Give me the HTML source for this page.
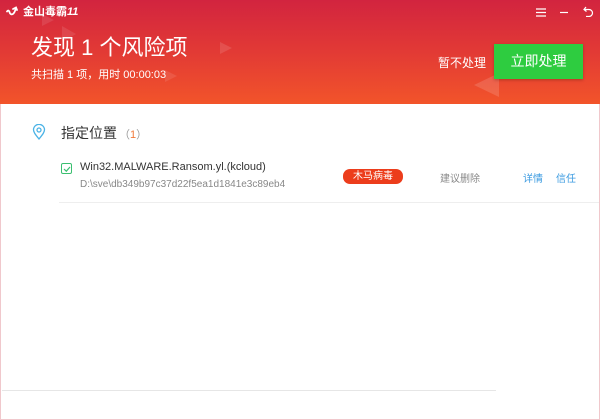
<!DOCTYPE html>
<html><head><meta charset="utf-8"><style>
*{margin:0;padding:0;box-sizing:border-box}
body{width:600px;height:420px;overflow:hidden;background:#fff;font-family:"Liberation Sans","Noto Sans CJK SC",sans-serif;position:relative}
.hd{position:absolute;left:0;top:0;width:600px;height:104px;background:linear-gradient(180deg,#d2243f 0%,#e23a35 50%,#f2542a 100%);overflow:hidden}
.tri{position:absolute;width:0;height:0;border-style:solid}
.t{position:absolute;color:#fff;white-space:nowrap;line-height:1}
.frame{position:absolute;left:0;top:104px;width:600px;height:316px;border:1px solid #f0c8cc;border-top:none}
</style></head><body>
<div class="hd">
 <div class="tri" style="left:42px;top:14px;border-width:6px 0 6px 12px;border-color:transparent transparent transparent rgba(255,255,255,.1)"></div>
 <div class="tri" style="left:62px;top:26px;border-width:8px 0 8px 14px;border-color:transparent transparent transparent rgba(255,255,255,.1)"></div>
 <div class="tri" style="left:220px;top:42px;border-width:6px 0 6px 12px;border-color:transparent transparent transparent rgba(255,255,255,.12)"></div>
 <div class="tri" style="left:165px;top:70px;border-width:6px 0 6px 12px;border-color:transparent transparent transparent rgba(255,255,255,.1)"></div>
 <div class="tri" style="left:474px;top:73px;border-width:12px 25px 12px 0;border-color:transparent rgba(255,255,255,.14) transparent transparent"></div>
 <svg style="position:absolute;left:6px;top:6px" width="12" height="12" viewBox="0 0 12 12"><path d="M1 5.5C2 4 3 4.5 3.5 6C4 8.5 6 9 7.5 7.5C9 6 9.5 3.5 10 1.5M7 3L10 1.5L11 4" fill="none" stroke="#fff" stroke-width="1.8" stroke-linecap="round"/></svg>
 <div class="t" style="left:23px;top:7px;font-size:11px;font-weight:bold">金山毒霸<i>11</i></div>
 <div class="t" style="left:31px;top:37px;font-size:22px">发现 1 个风险项</div>
 <div class="t" style="left:31px;top:70px;font-size:11px">共扫描 1 项，用时 00:00:03</div>
 <svg style="position:absolute;left:536px;top:8px" width="10" height="9"><path d="M0 1H10M0 4.5H10M0 8H10" stroke="#fff" stroke-width="1.2"/></svg>
 <svg style="position:absolute;left:560px;top:8px" width="8" height="9"><path d="M0 4.5H8" stroke="#fff" stroke-width="1.2"/></svg>
 <svg style="position:absolute;left:583px;top:6px" width="11" height="11"><path d="M3 1L1 3.5L3.5 5.5M1.5 3.5H6A3.5 3.5 0 0 1 6 10.5H3" fill="none" stroke="#fff" stroke-width="1.2"/></svg>
 <div class="t" style="left:438px;top:57px;font-size:12px">暂不处理</div>
 <div style="position:absolute;left:494px;top:44px;width:89px;height:35px;background:#2ecc40;color:#fff;font-size:14px;text-align:center;line-height:35px;box-shadow:0 1px 3px rgba(0,0,0,.25)">立即处理</div>
</div>
<div class="frame"></div>
<svg style="position:absolute;left:32px;top:124px" width="14" height="16" viewBox="0 0 14 16"><path d="M7 15C3 10 1.5 8 1.5 5.8A5.5 5.5 0 0 1 12.5 5.8C12.5 8 11 10 7 15Z" fill="none" stroke="#4bb3e6" stroke-width="1.3"/><circle cx="7" cy="6" r="2" fill="none" stroke="#4bb3e6" stroke-width="1.3"/></svg>
<div style="position:absolute;left:61px;top:123px;font-size:14px;color:#333">指定位置</div>
<div style="position:absolute;left:119px;top:126px;font-size:11px;color:#999">（<span style="color:#f07a3a">1</span>）</div>
<div style="position:absolute;left:61px;top:163px;width:11px;height:11px;border:1px solid #3bbf70;border-radius:2px"></div>
<svg style="position:absolute;left:63px;top:165px" width="8" height="8"><path d="M1 4L3.3 6.2L7 2" fill="none" stroke="#3bbf70" stroke-width="1.2"/></svg>
<div style="position:absolute;left:80px;top:161px;font-size:11px;color:#333">Win32.MALWARE.Ransom.yl.(kcloud)</div>
<div style="position:absolute;left:80px;top:179px;font-size:10px;color:#888">D:\sve\db349b97c37d22f5ea1d1841e3c89eb4</div>
<div style="position:absolute;left:343px;top:169px;width:60px;height:15px;background:#ec3d1c;border-radius:7px;color:#fff;font-size:10px;display:flex;align-items:center;justify-content:center;line-height:1">木马病毒</div>
<div style="position:absolute;left:440px;top:170px;font-size:10px;color:#888">建议删除</div>
<div style="position:absolute;left:523px;top:170px;font-size:10px;color:#3a9ae0">详情</div>
<div style="position:absolute;left:556px;top:170px;font-size:10px;color:#3a9ae0">信任</div>
<div style="position:absolute;left:59px;top:202px;width:540px;height:1px;background:#eee"></div>
<div style="position:absolute;left:2px;top:390px;width:494px;height:1px;background:#e6e6e6"></div>
</body></html>
